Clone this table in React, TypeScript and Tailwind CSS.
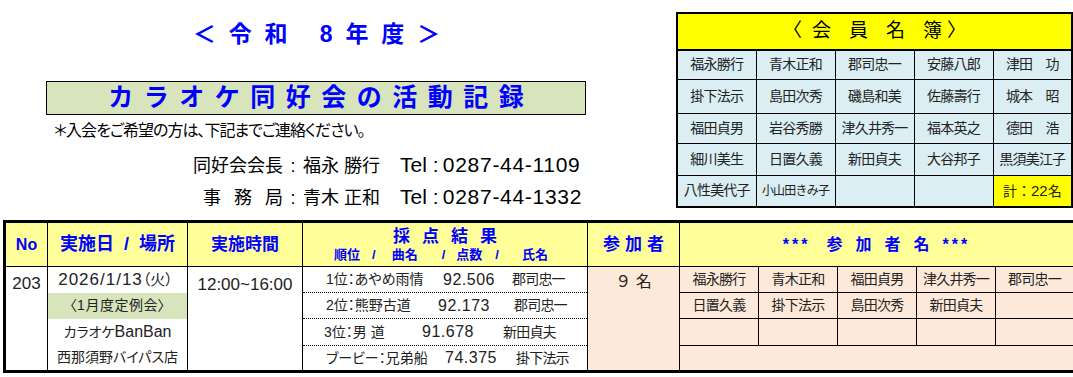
import React from 'react'

const FONT = '"Liberation Sans", "Noto Sans CJK JP", sans-serif'

const MEMBERS = [
  ['福永勝行', '青木正和', '郡司忠一', '安藤八郎', '津田　功'],
  ['掛下法示', '島田次秀', '磯島和美', '佐藤壽行', '城本　昭'],
  ['福田貞男', '岩谷秀勝', '津久井秀一', '福本英之', '德田　浩'],
  ['細川美生', '日置久義', '新田貞夫', '大谷邦子', '黒須美江子'],
]
const ROW_H = ['h-[29px]', 'h-[34px]', 'h-[30px]', 'h-[32px]', 'h-[32px]']

// 順位 / 曲名 / 点数 / 氏名 : 列の左端からの位置に合わせた幅
const RESULTS = [
  { label: '1位：あやめ雨情', score: '92.506', name: '郡司忠一', lw: 'w-[117px]', sw: 'w-[69px]', pl: 'pl-[23px]' },
  { label: '2位：熊野古道', score: '92.173', name: '郡司忠一', lw: 'w-[112px]', sw: 'w-[76px]', pl: 'pl-[23px]' },
  { label: '3位：男 道', score: '91.678', name: '新田貞夫', lw: 'w-[98px]', sw: 'w-[81px]', pl: 'pl-[21px]' },
  { label: 'ブービー：兄弟船', score: '74.375', name: '掛下法示', lw: 'w-[119px]', sw: 'w-[71px]', pl: 'pl-[23px]' },
]

const ATTEND = [
  ['福永勝行', '青木正和', '福田貞男', '津久井秀一', '郡司忠一'],
  ['日置久義', '掛下法示', '島田次秀', '新田貞夫', ''],
  ['', '', '', '', ''],
]

function MemberTable() {
  return (
    <table className="table-fixed border-collapse border-2 border-black w-[397px] text-[14px] tracking-[-0.8px] text-[#222]">
      <colgroup>
        {[0, 1, 2, 3, 4].map(i => <col key={i} className="w-[79px]" />)}
      </colgroup>
      <tbody>
        <tr className="h-[37px] bg-[#ffff00]">
          <td colSpan={5} className="border-b-2 border-black p-0">
            <div className="flex items-center pl-[105px] text-[19px] text-black tracking-normal">
              <span className="w-[19px]">〈</span>
              <span className="ml-[10px]">会</span>
              <span className="ml-[18px]">員</span>
              <span className="ml-[18px]">名</span>
              <span className="ml-[18px]">簿</span>
              <span className="ml-[5px] w-[19px]">〉</span>
            </div>
          </td>
        </tr>
        {MEMBERS.map((row, r) => (
          <tr key={r} className={ROW_H[r]}>
            {row.map((n, c) => (
              <td key={c} className="border border-black bg-[#daeef3] text-center whitespace-pre p-0">
                {n}
              </td>
            ))}
          </tr>
        ))}
        <tr className={ROW_H[4]}>
          <td className="border border-black bg-[#daeef3] text-center p-0">八性美代子</td>
          <td className="border border-black bg-[#daeef3] text-center text-[12px] p-0">小山田きみ子</td>
          <td className="border border-black bg-[#daeef3]" />
          <td className="border border-black bg-[#daeef3]" />
          <td className="border border-black bg-[#ffff00] text-center p-0 tracking-normal">
            計：<span className="text-[15px]">22</span>名
          </td>
        </tr>
      </tbody>
    </table>
  )
}

function MainTable() {
  const head = 'border border-black bg-[#ffff99] text-[#0000ff] font-bold text-center p-0'
  return (
    <table className="table-fixed border-collapse border-[3px] border-black w-[1070px] text-[14px] text-[#222]">
      <colgroup>
        <col className="w-[43px]" />
        <col className="w-[140px]" />
        <col className="w-[115px]" />
        <col className="w-[285px]" />
        <col className="w-[92px]" />
        {[0, 1, 2, 3, 4].map(i => <col key={i} className="w-[79px]" />)}
      </colgroup>
      <thead>
        <tr className="h-[45px]">
          <th className={`${head} text-[16px]`}>No</th>
          <th className={`${head} text-[18px] whitespace-pre`}>実施日  /  場所</th>
          <th className={`${head} text-[17px]`}>実施時間</th>
          <th className={`${head}`}>
            <div className="text-[17px] leading-[20px] tracking-[12px] pl-[12px]">採点結果</div>
            <div className="flex text-[13px] leading-[16px]">
              <span className="ml-[31px]">順位</span>
              <span className="ml-[12px]">/</span>
              <span className="ml-[16px]">曲名</span>
              <span className="ml-[24px]">/</span>
              <span className="ml-[11px]">点数</span>
              <span className="ml-[13px]">/</span>
              <span className="ml-[23px]">氏名</span>
            </div>
          </th>
          <th className={`${head} text-[17px] tracking-[5px] pl-[5px]`}>参加者</th>
          <th colSpan={5} className={`${head} text-[16px]`}>
            <div className="flex justify-center items-center">
              <span className="tracking-[3px]">***</span>
              <span className="ml-[16px] tracking-[13px]">参加者名</span>
              <span className="tracking-[3px]">***</span>
            </div>
          </th>
        </tr>
      </thead>
      <tbody>
        {[0, 1, 2, 3].map(r => (
          <tr key={r} className={['h-[25px]', 'h-[26px]', 'h-[27px]', 'h-[26px]'][r]}>
            {r === 0 && (
              <td rowSpan={4} className="border border-black align-top text-center pt-[4px] text-[17px]">203</td>
            )}
            <td className={`text-center p-0 [font-feature-settings:'palt'] ${r === 1 ? 'bg-[#d8e4bc]' : ''}`}>
              {r === 0 ? (
                <span className="text-[17px] tracking-[1px] pr-[4px]">2026/1/13<span className="text-[15px] tracking-normal">（火）</span></span>
              ) : r === 1 ? (
                <span className="tracking-[0.5px]">〈1月度定例会〉</span>
              ) : r === 2 ? (
                <span className="text-[14px]">カラオケ<span className="text-[16px]">BanBan</span></span>
              ) : (
                <span className="text-[14px]">西那須野バイパス店</span>
              )}
            </td>
            {r === 0 && (
              <td rowSpan={4} className="border border-black align-top text-center pt-[5px] text-[17px]">12:00~16:00</td>
            )}
            <td className={`border-l border-r border-black p-0 [font-feature-settings:'palt'] ${r < 3 ? 'border-b border-b-black border-dotted' : ''}`}>
              <div className={`flex items-center whitespace-pre ${RESULTS[r].pl}`}>
                <span className={RESULTS[r].lw}>{RESULTS[r].label}</span>
                <span className={`${RESULTS[r].sw} text-[16px] tracking-[0.5px]`}>{RESULTS[r].score}</span>
                <span className="tracking-[-0.8px]">{RESULTS[r].name}</span>
              </div>
            </td>
            {r === 0 && (
              <td rowSpan={4} className="border border-black bg-[#fde9d9] align-top text-center pt-[3px] text-[16px]">９ 名</td>
            )}
            {r < 3
              ? ATTEND[r].map((n, c) => (
                  <td key={c} className="border border-black bg-[#fde9d9] text-center p-0 whitespace-nowrap tracking-[-0.8px]">{n}</td>
                ))
              : <td colSpan={5} className="border border-black bg-[#fde9d9]" />}
          </tr>
        ))}
      </tbody>
    </table>
  )
}

export default function App() {
  return (
    <div className="w-[1073px] h-[377px] bg-white overflow-hidden" style={{ fontFamily: FONT }}>
      <div className="flex h-[220px]">
        <div className="w-[676px] shrink-0">
          <div className="h-[21px]" />
          <div className="w-[633px] text-center text-[#0000ff] font-bold text-[23px] leading-[26px] tracking-[0.56em] pl-[0.56em] whitespace-pre">
            ＜令和 8年度＞
          </div>
          <div className="h-[34px]" />
          <div className="ml-[46px] w-[540px] h-[34px] border border-black bg-[#d8e4bc] flex items-center justify-center text-[#0000ff] font-bold text-[25px] tracking-[0.42em] pl-[0.42em]">
            カラオケ同好会の活動記録
          </div>
          <div className="ml-[54px] mt-[5px] text-[16px] leading-[22px] tracking-[-1px] text-black [font-feature-settings:'palt']">＊入会をご希望の方は、下記までご連絡ください。</div>
          <div className="flex items-baseline mt-[7px] h-[26px] text-black">
            <span className="w-[283px] text-right text-[18px]">同好会会長</span>
            <span className="w-[20px] text-center text-[18px]">:</span>
            <span className="w-[97px] text-[18px] whitespace-pre">福永 勝行</span>
            <span className="text-[21px]">Tel</span>
            <span className="ml-[6px] w-[10px] text-[21px]">:</span>
            <span className="text-[21px] tracking-[0.7px]">0287-44-1109</span>
          </div>
          <div className="flex items-baseline mt-[6px] h-[26px] text-black">
            <span className="w-[283px] flex justify-end gap-[13px] text-[18px]">
              <span>事</span>
              <span>務</span>
              <span>局</span>
            </span>
            <span className="w-[20px] text-center text-[18px]">:</span>
            <span className="w-[97px] text-[18px] whitespace-pre">青木 正和</span>
            <span className="text-[21px]">Tel</span>
            <span className="ml-[6px] w-[10px] text-[21px]">:</span>
            <span className="text-[21px] tracking-[0.7px]">0287-44-1332</span>
          </div>
        </div>
        <div className="pt-[12px]">
          <MemberTable />
        </div>
      </div>
      <div className="pl-[3px]">
        <MainTable />
      </div>
    </div>
  )
}
